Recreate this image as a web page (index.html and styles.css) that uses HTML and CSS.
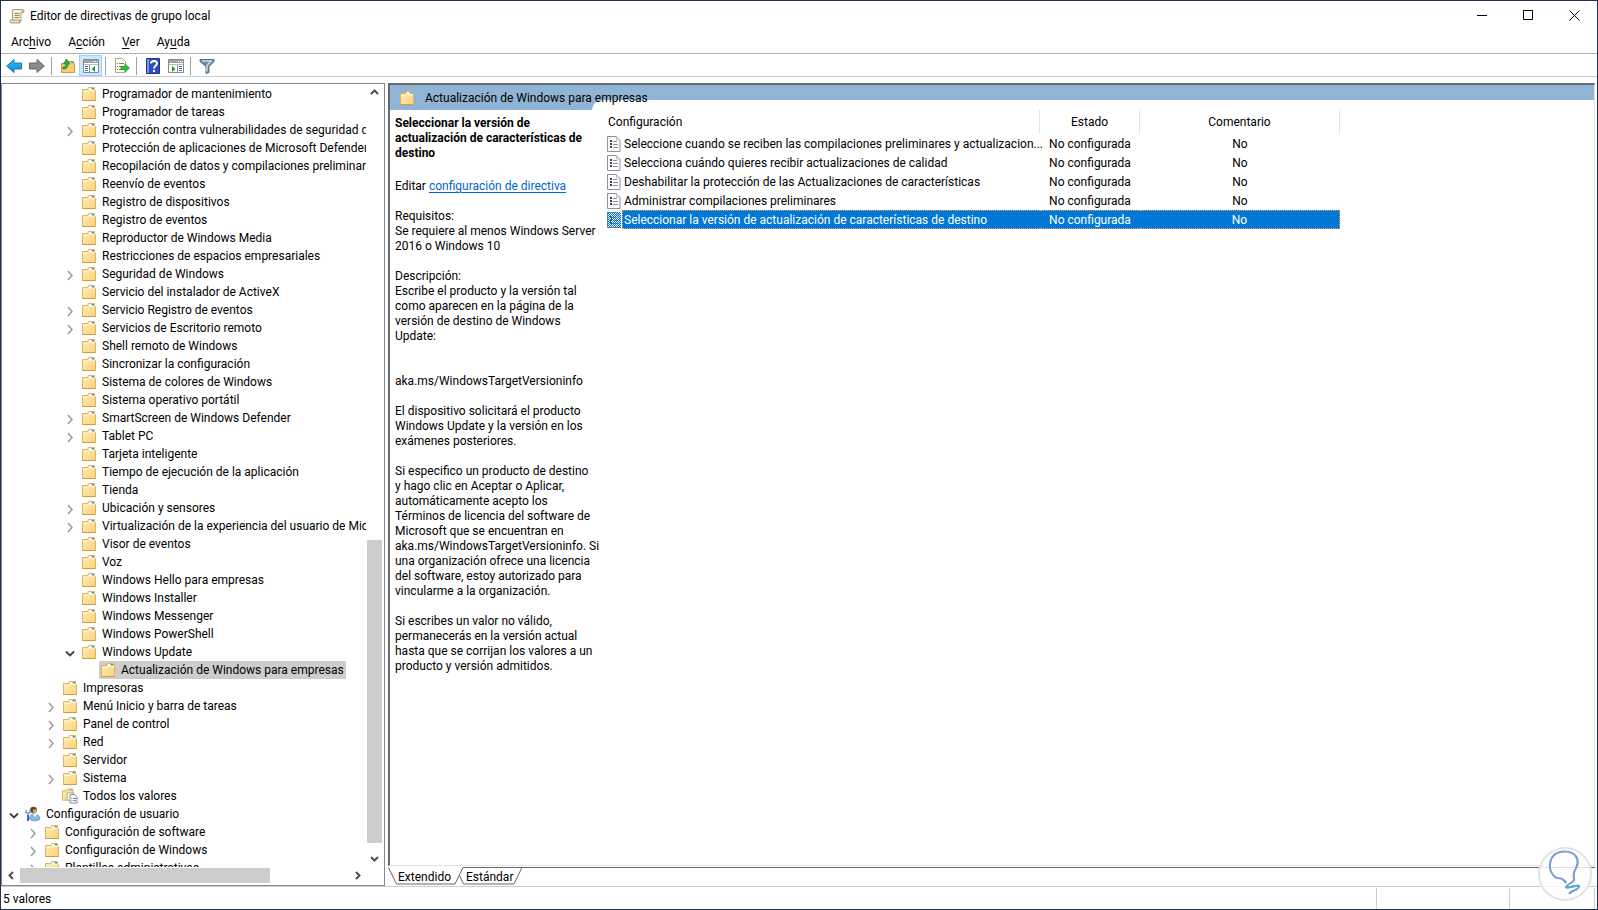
FILE: index.html
```
<!DOCTYPE html>
<html lang="es">
<head>
<meta charset="utf-8">
<title>Editor de directivas de grupo local</title>
<link rel="stylesheet" href="styles.css">
</head>
<body>
<svg class="defs" aria-hidden="true">
  <defs>
    <linearGradient id="paper" x1="0" y1="0" x2="1" y2="1"><stop offset="0" stop-color="#ffedb5"/><stop offset="1" stop-color="#fad27a"/></linearGradient>
    <linearGradient id="blue" x1="0" y1="0" x2="0" y2="1"><stop offset="0" stop-color="#35c0f5"/><stop offset="1" stop-color="#0a86d8"/></linearGradient>
    <pattern id="dither" width="2" height="2" patternUnits="userSpaceOnUse"><path d="M0 0h1v1H0zM1 1h1v1H1z" fill="#0078d7"/></pattern>
    <symbol id="folder" viewBox="0 0 16 16">
      <path d="M1.500 14.500V3.500h5l1-2h6v3h1v10z" fill="url(#paper)" stroke="#dfb45c"/>
      <path d="M8.500 2h4.500v2H8z" fill="#fff"/><path d="M10.500 2h2.500v1.500h-2.500z" fill="#39a0e0"/>
      <path d="M2 5.500h5.500l1-1h5.500" fill="none" stroke="#fff3cb"/>
      <path d="M1.500 14.500h13" stroke="#cc9c46"/>
    </symbol>
    <symbol id="page" viewBox="0 0 14 16">
      <path d="M.5.500h9l3.500 3.500v11.500H.5z" fill="#fff" stroke="#8e9297"/>
      <path d="M9.500.500v3.500H13" fill="#eee" stroke="#bbb"/>
      <path d="M3 4h2v2H3zM3 7h2v2H3zM3 10h2v2H3z" fill="#3b4654"/>
      <path d="M6 5.500h4M6 8.500h5M6 11.500h5" stroke="#8591a0"/>
    </symbol>
    <symbol id="right" viewBox="0 0 16 16"><path d="M6 4l4 4.500L6 13" fill="none" stroke="#9b9b9b" stroke-width="1.500"/></symbol>
    <symbol id="down" viewBox="0 0 16 16"><path d="M4 6.500l4 4 4-4" fill="none" stroke="#404040" stroke-width="1.800"/></symbol>
    <symbol id="chev" viewBox="0 0 17 17"><path d="M5 10l3.500-3.500L12 10" fill="none" stroke="#505050" stroke-width="2"/></symbol>
    <symbol id="all" viewBox="0 0 17 16">
      <path d="M.5 12.500v-10h4l1-2h6v3h1v9z" fill="url(#paper)" stroke="#dfb45c"/><path d="M8 1h3v1H8z" fill="#39a0e0"/>
      <path d="M5.500 4.500h6v8h-6z" fill="#fff" stroke="#aaa"/><path d="M8.500 6.500h5l2.500 2.500v6.500H8.500z" fill="#fff" stroke="#888"/>
      <path d="M10 10.500h1m1 0h3M10 13h1m1 0h3" stroke="#536273"/>
    </symbol>
    <symbol id="user" viewBox="0 0 16 16">
      <circle cx="8.500" cy="4" r="3.300" fill="#59482f"/><path d="M8 3.500h3.500V6L9.500 8 8 6z" fill="#d8a66e"/>
      <path d="M4.500 13c0-4 2-5 4.500-5 4 0 5.500 2 6 5-2 2.500-8 2.500-10.500 0z" fill="#89b9dc" stroke="#518cb7" stroke-width=".7"/>
      <path d="M8 8l2 3 2-3z" fill="#fff"/>
      <path d="M1 4v2.500l2 1 2-1V4M3 7v8" fill="none" stroke="#8198b1" stroke-width="1.500"/><path d="M3 9v6" stroke="#2f72c4" stroke-width="2"/>
    </symbol>
    <symbol id="pane" viewBox="0 0 16 16">
      <path d="M.5 1.500h15v13H.5z" fill="#fff" stroke="#858b91"/><path d="M1 2h14v3H1z" fill="#9aa2ab"/><path d="M10 3.500h1m1 0h1m1 0h1" stroke="#fff"/>
      <path d="M1 6.500h14" stroke="#b9bec3"/>
    </symbol>
  </defs>
</svg>
<div class="window">
  <header class="titlebar">
    <svg class="i16" viewBox="0 0 16 16"><path d="M4 1.500h9.500c2 0 2 3 0 3H12v9H3.500V3z" fill="#f7f0d6" stroke="#a99c74"/><path d="M12 4.500h2V1.500" fill="#cbbd92" stroke="#a99c74"/><path d="M5.500 5.500h5m-5 2h5m-5 2h5" stroke="#918874"/><path d="M1.500 12h9v3h-8c-2 0-2-2-1-3z" fill="#eee2b9" stroke="#a99c74"/></svg>
    <h1 class="title">Editor de directivas de grupo local</h1>
    <div class="controls">
      <button aria-label="Minimizar"><svg viewBox="0 0 11 11"><path d="M0 5.500h10"/></svg></button>
      <button aria-label="Maximizar"><svg viewBox="0 0 11 11"><path d="M.5.500h9v9h-9z"/></svg></button>
      <button aria-label="Cerrar"><svg viewBox="0 0 11 11"><path d="M.5.500l10 10m0-10l-10 10"/></svg></button>
    </div>
  </header>
  <nav class="menu">
    <button>Arc<u>h</u>ivo</button><button>A<u>c</u>ción</button><button><u>V</u>er</button><button>Ay<u>u</u>da</button>
  </nav>
  <div class="toolbar">
    <button aria-label="Atrás"><svg viewBox="0 0 16 16"><path d="M.7 8L8 1.500V5h7.500v6H8v3.500z" fill="url(#blue)" stroke="#1778b0"/></svg></button>
    <button aria-label="Adelante"><svg viewBox="0 0 16 16"><path d="M15.300 8L8 1.500V5H.5v6H8v3.500z" fill="#8b8b8b" stroke="#666"/></svg></button>
    <span class="sep"></span>
    <button aria-label="Subir un nivel"><svg viewBox="0 0 16 16"><path d="M1.500 14.500v-9h6l1-2h5v2h1v9z" fill="#f7cd72" stroke="#c99b45"/><path d="M11 4h3v1h-3z" fill="#39a0e0"/><path d="M3 11c4 0 5-2 5-5h2L6.500 1 3.500 6H6c0 2-1 3-3 3z" fill="#2fae35" stroke="#168421" stroke-width=".7"/></svg></button>
    <button class="on" aria-label="Mostrar u ocultar árbol"><svg viewBox="0 0 16 16"><use href="#pane"/><path d="M6.500 7v8" stroke="#858b91"/><path d="M2 8.500h3m-3 2h3m-3 2h3" stroke="#4a6f94"/><path d="M12 8v6l-3.500-3z" fill="#16a51e"/></svg></button>
    <span class="sep"></span>
    <button aria-label="Exportar lista"><svg viewBox="0 0 16 16"><path d="M1.500.500h7l3 3v11h-10z" fill="#fffbe9" stroke="#b3aa8c"/><path d="M3 5.500h1m1 0h5M3 8.500h1m1 0h4M3 11.500h1m1 0h4" stroke="#7b7b86"/><path d="M7 8.500h4V6l4.500 4-4.500 4v-2.500H7z" fill="#34bd37" stroke="#1c9222" stroke-width=".7"/></svg></button>
    <span class="sep"></span>
    <button aria-label="Ayuda"><svg viewBox="0 0 16 16"><path d="M1.500.500h13v15h-13z" fill="#2c50b8" stroke="#1c348c"/><path d="M2 1h2v14H2z" fill="#7896df"/><path d="M6 5.500c0-3.500 6-3.500 6 0 0 2.500-3 2-3 5M9 12v2" fill="none" stroke="#fff" stroke-width="2"/></svg></button>
    <button aria-label="Panel de acciones"><svg viewBox="0 0 16 16"><use href="#pane"/><path d="M9.500 7v8" stroke="#858b91"/><path d="M11 8.500h3m-3 2h3m-3 2h3" stroke="#4a6f94"/><path d="M4 8v6l3.500-3z" fill="#16a51e"/></svg></button>
    <span class="sep"></span>
    <button aria-label="Filtro"><svg viewBox="0 0 16 16"><path d="M1 1.500h14v2l-5 5v6l-3 1v-7l-6-5z" fill="#718ba0" stroke="#587087"/><path d="M3 3h9l-4 4.500v6" fill="none" stroke="#c9dce8" stroke-width="1.500"/></svg></button>
  </div>
  <div class="work">
    <aside class="treebox">
      <ul class="tree">
        <li class="l3"><svg><use href="#folder"/></svg><span>Programador de mantenimiento</span></li>
        <li class="l3"><svg><use href="#folder"/></svg><span>Programador de tareas</span></li>
        <li class="l3"><button aria-label="Expandir"><svg><use href="#right"/></svg></button><svg><use href="#folder"/></svg><span>Protección contra vulnerabilidades de seguridad d</span></li>
        <li class="l3"><svg><use href="#folder"/></svg><span>Protección de aplicaciones de Microsoft Defender</span></li>
        <li class="l3"><svg><use href="#folder"/></svg><span>Recopilación de datos y compilaciones preliminar</span></li>
        <li class="l3"><svg><use href="#folder"/></svg><span>Reenvío de eventos</span></li>
        <li class="l3"><svg><use href="#folder"/></svg><span>Registro de dispositivos</span></li>
        <li class="l3"><svg><use href="#folder"/></svg><span>Registro de eventos</span></li>
        <li class="l3"><svg><use href="#folder"/></svg><span>Reproductor de Windows Media</span></li>
        <li class="l3"><svg><use href="#folder"/></svg><span>Restricciones de espacios empresariales</span></li>
        <li class="l3"><button aria-label="Expandir"><svg><use href="#right"/></svg></button><svg><use href="#folder"/></svg><span>Seguridad de Windows</span></li>
        <li class="l3"><svg><use href="#folder"/></svg><span>Servicio del instalador de ActiveX</span></li>
        <li class="l3"><button aria-label="Expandir"><svg><use href="#right"/></svg></button><svg><use href="#folder"/></svg><span>Servicio Registro de eventos</span></li>
        <li class="l3"><button aria-label="Expandir"><svg><use href="#right"/></svg></button><svg><use href="#folder"/></svg><span>Servicios de Escritorio remoto</span></li>
        <li class="l3"><svg><use href="#folder"/></svg><span>Shell remoto de Windows</span></li>
        <li class="l3"><svg><use href="#folder"/></svg><span>Sincronizar la configuración</span></li>
        <li class="l3"><svg><use href="#folder"/></svg><span>Sistema de colores de Windows</span></li>
        <li class="l3"><svg><use href="#folder"/></svg><span>Sistema operativo portátil</span></li>
        <li class="l3"><button aria-label="Expandir"><svg><use href="#right"/></svg></button><svg><use href="#folder"/></svg><span>SmartScreen de Windows Defender</span></li>
        <li class="l3"><button aria-label="Expandir"><svg><use href="#right"/></svg></button><svg><use href="#folder"/></svg><span>Tablet PC</span></li>
        <li class="l3"><svg><use href="#folder"/></svg><span>Tarjeta inteligente</span></li>
        <li class="l3"><svg><use href="#folder"/></svg><span>Tiempo de ejecución de la aplicación</span></li>
        <li class="l3"><svg><use href="#folder"/></svg><span>Tienda</span></li>
        <li class="l3"><button aria-label="Expandir"><svg><use href="#right"/></svg></button><svg><use href="#folder"/></svg><span>Ubicación y sensores</span></li>
        <li class="l3"><button aria-label="Expandir"><svg><use href="#right"/></svg></button><svg><use href="#folder"/></svg><span>Virtualización de la experiencia del usuario de Mic</span></li>
        <li class="l3"><svg><use href="#folder"/></svg><span>Visor de eventos</span></li>
        <li class="l3"><svg><use href="#folder"/></svg><span>Voz</span></li>
        <li class="l3"><svg><use href="#folder"/></svg><span>Windows Hello para empresas</span></li>
        <li class="l3"><svg><use href="#folder"/></svg><span>Windows Installer</span></li>
        <li class="l3"><svg><use href="#folder"/></svg><span>Windows Messenger</span></li>
        <li class="l3"><svg><use href="#folder"/></svg><span>Windows PowerShell</span></li>
        <li class="l3"><button aria-label="Contraer"><svg><use href="#down"/></svg></button><svg><use href="#folder"/></svg><span>Windows Update</span></li>
        <li class="l4 current"><svg><use href="#folder"/></svg><span>Actualización de Windows para empresas</span></li>
        <li class="l2"><svg><use href="#folder"/></svg><span>Impresoras</span></li>
        <li class="l2"><button aria-label="Expandir"><svg><use href="#right"/></svg></button><svg><use href="#folder"/></svg><span>Menú Inicio y barra de tareas</span></li>
        <li class="l2"><button aria-label="Expandir"><svg><use href="#right"/></svg></button><svg><use href="#folder"/></svg><span>Panel de control</span></li>
        <li class="l2"><button aria-label="Expandir"><svg><use href="#right"/></svg></button><svg><use href="#folder"/></svg><span>Red</span></li>
        <li class="l2"><svg><use href="#folder"/></svg><span>Servidor</span></li>
        <li class="l2"><button aria-label="Expandir"><svg><use href="#right"/></svg></button><svg><use href="#folder"/></svg><span>Sistema</span></li>
        <li class="l2"><svg><use href="#all"/></svg><span>Todos los valores</span></li>
        <li class="l0"><button aria-label="Contraer"><svg><use href="#down"/></svg></button><svg><use href="#user"/></svg><span>Configuración de usuario</span></li>
        <li class="l1"><button aria-label="Expandir"><svg><use href="#right"/></svg></button><svg><use href="#folder"/></svg><span>Configuración de software</span></li>
        <li class="l1"><button aria-label="Expandir"><svg><use href="#right"/></svg></button><svg><use href="#folder"/></svg><span>Configuración de Windows</span></li>
        <li class="l1"><button aria-label="Expandir"><svg><use href="#right"/></svg></button><svg><use href="#folder"/></svg><span>Plantillas administrativas</span></li>
      </ul>
      <div class="vscroll">
        <button aria-label="Arriba"><svg><use href="#chev"/></svg></button>
        <div class="track"><div class="thumb"></div></div>
        <button class="flip" aria-label="Abajo"><svg><use href="#chev"/></svg></button>
      </div>
      <div class="hscroll">
        <button class="toleft" aria-label="Izquierda"><svg><use href="#chev"/></svg></button>
        <div class="track"><div class="thumb"></div></div>
        <button class="toright" aria-label="Derecha"><svg><use href="#chev"/></svg></button>
      </div>
    </aside>
    <main class="result">
      <div class="view">
        <div class="band"><svg class="i16"><use href="#folder"/></svg><h2>Actualización de Windows para empresas</h2></div>
        <div class="cols">
          <section class="detail">
            <h3>Seleccionar la versión de<br>actualización de características de<br>destino</h3>
            <p class="edit">Editar <a href="#editar">configuración de directiva</a></p>
            <p>Requisitos:<br>Se requiere al menos Windows Server<br>2016 o Windows 10</p>
            <p>Descripción:<br>Escribe el producto y la versión tal<br>como aparecen en la página de la<br>versión de destino de Windows<br>Update:</p>
            <p class="far">aka.ms/WindowsTargetVersioninfo</p>
            <p>El dispositivo solicitará el producto<br>Windows Update y la versión en los<br>exámenes posteriores.</p>
            <p>Si especifico un producto de destino<br>y hago clic en Aceptar o Aplicar,<br>automáticamente acepto los<br>Términos de licencia del software de<br>Microsoft que se encuentran en<br>aka.ms/WindowsTargetVersioninfo. Si<br>una organización ofrece una licencia<br>del software, estoy autorizado para<br>vincularme a la organización.</p>
            <p>Si escribes un valor no válido,<br>permanecerás en la versión actual<br>hasta que se corrijan los valores a un<br>producto y versión admitidos.</p>
          </section>
          <section class="list">
            <table>
              <colgroup><col class="c1"><col class="c2"><col class="c3"></colgroup>
              <thead><tr><th>Configuración</th><th>Estado</th><th>Comentario</th></tr></thead>
              <tbody>
                <tr><td><div class="name"><svg><use href="#page"/></svg><span>Seleccione cuando se reciben las compilaciones preliminares y actualizacion...</span></div></td><td>No configurada</td><td>No</td></tr>
                <tr><td><div class="name"><svg><use href="#page"/></svg><span>Selecciona cuándo quieres recibir actualizaciones de calidad</span></div></td><td>No configurada</td><td>No</td></tr>
                <tr><td><div class="name"><svg><use href="#page"/></svg><span>Deshabilitar la protección de las Actualizaciones de características</span></div></td><td>No configurada</td><td>No</td></tr>
                <tr><td><div class="name"><svg><use href="#page"/></svg><span>Administrar compilaciones preliminares</span></div></td><td>No configurada</td><td>No</td></tr>
                <tr class="sel"><td><div class="name"><svg><use href="#page"/><rect width="14" height="16" fill="url(#dither)"/></svg><span>Seleccionar la versión de actualización de características de destino</span></div></td><td>No configurada</td><td>No</td></tr>
              </tbody>
            </table>
          </section>
        </div>
      </div>
      <div class="tabs">
        <svg viewBox="0 0 140 18"><path d="M0 0h75l-8 17H9L.5 0z" fill="#fff"/><path d="M.5.500l8 16.500H67L75 .500h59L126 17H75.500l-4-8.500" fill="none" stroke="#666"/></svg>
        <button class="t1">Extendido</button><button class="t2">Estándar</button>
      </div>
    </main>
  </div>
  <footer class="status"><span class="s1">5 valores</span><span class="s2"></span><span class="s3"></span></footer>
  <svg class="bulb" viewBox="0 0 54 54" aria-hidden="true">
    <circle cx="27" cy="27" r="26" fill="#fff" fill-opacity=".8" stroke="#e2e3e5" stroke-width="2"/>
    <path d="M28 36c-3-5-6-5-9-5-6-3-9-11-6-18C16 4 27 3 34 6c7 4 7 9 4 15-2 4-3 6-2 12-1 3-7 4-8 7 1 2 9-2 13-1 1 4-8 4-10 8" fill="none" stroke="#7b9bd1" stroke-width="2"/>
    <path d="M28 36l-2-3m2 7c1 2 9-2 13-1" fill="none" stroke="#48add7" stroke-width="2"/>
  </svg>
</div>
</body>
</html>
```
FILE: styles.css
```
* { box-sizing: border-box; }
body { margin: 0; font: 12px/15px "Segoe UI", Roboto, "Open Sans", sans-serif; color: #000; background: #fff; }
button { border: 0; padding: 0; margin: 0; background: none; font: inherit; color: inherit; }
h1, h2, h3, p, ul { margin: 0; padding: 0; font-size: inherit; font-weight: normal; }
svg { display: block; flex: none; }
.defs { position: absolute; width: 0; height: 0; }
.i16 { width: 16px; height: 16px; }

.window { position: relative; height: 100vh; display: flex; flex-direction: column; border: 1px solid #1f3050; overflow: hidden; }

.titlebar { display: flex; align-items: center; height: 29px; padding-left: 8px; flex: none; }
.title { margin-left: 5px; padding-top: 2px; flex: 1; }
.controls { display: flex; }
.controls button { width: 46px; height: 29px; display: grid; place-items: center; }
.controls svg { width: 11px; height: 11px; fill: none; stroke: #000; }

.menu { display: flex; align-items: center; gap: 17px; height: 24px; padding: 2px 0 0 10px; border-bottom: 1px solid #b0b0b0; flex: none; }
.menu u { text-underline-offset: 2px; }

.toolbar { display: flex; align-items: flex-end; height: 23px; padding-left: 1px; border-bottom: 1px solid #cdcdcd; flex: none; }
.toolbar button { width: 23px; height: 21px; display: grid; place-items: center; border: 1px solid transparent; }
.toolbar button svg { width: 16px; height: 16px; }
.toolbar .on { background: #cce8ff; border-color: #99d1ff; }
.sep { width: 1px; height: 18px; margin: 0 4px 1px 3px; background: #a0a0a0; }

.work { flex: 1; min-height: 0; display: flex; gap: 3px; padding: 6px 2px 0 0; }

.treebox { width: 384px; flex: none; display: grid; grid-template-columns: 1fr 18px; grid-template-rows: 1fr 18px; border: 1px solid #828790; min-height: 0; }
.tree { list-style: none; overflow: hidden; min-height: 0; min-width: 0; padding-top: 1px; }
.tree li { position: relative; display: flex; align-items: center; height: 18px; white-space: nowrap; }
.tree li > svg { width: 16px; height: 16px; }
.tree li > span { padding: 0 2px 0 5px; line-height: 18px; }
.tree button { position: absolute; margin-left: -19px; top: 2px; }
.tree button svg { width: 16px; height: 16px; }
.l0 { margin-left: 23px; }
.l1 { margin-left: 42px; }
.l2 { margin-left: 60px; }
.l3 { margin-left: 79px; }
.l4 { margin-left: 97px; padding-left: 1px; }
.current { width: max-content; background: #cdcdcd; }
.vscroll { display: flex; flex-direction: column; }
.hscroll { display: flex; padding-left: 1px; }
.vscroll button, .hscroll button { width: 17px; height: 17px; }
.vscroll button svg, .hscroll button svg { width: 17px; height: 17px; }
.flip { transform: rotate(180deg); }
.toleft { transform: rotate(-90deg); }
.toright { transform: rotate(90deg); }
.track { flex: 1; display: flex; }
.vscroll .track { flex-direction: column; justify-content: flex-end; padding: 0 2px 0 1px; }
.vscroll .thumb { height: 40.5%; margin-bottom: 7px; background: #cdcdcd; }
.hscroll .track { padding: 1px 0 2px; }
.hscroll .thumb { width: 76%; background: #cdcdcd; }

.result { flex: 1; min-width: 0; display: flex; flex-direction: column; }
.view { flex: 1; min-height: 0; display: flex; flex-direction: column; overflow: hidden; border: 1px solid #e3e3e3; border-top: 2px solid #696969; border-left: 2px solid #696969; }
.band { position: relative; z-index: 1; display: flex; align-items: center; gap: 10px; height: 25px; padding-left: 9px; flex: none; }
.band h2 { padding-top: 2px; }
.cols { flex: 1; min-height: 0; display: grid; grid-template-columns: 202px 1fr; margin-top: -25px; background: linear-gradient(#8fb4d6 25px, #fff 25px); }
.detail { position: relative; z-index: 1; margin-top: 25px; padding: 6px 0 0 5px; white-space: nowrap; }
.detail h3 { font-weight: bold; }
.detail p { margin-top: 15px; }
.detail .edit { margin-top: 18px; }
.detail .far { margin-top: 30px; }
.detail a { color: #0066cc; text-underline-offset: 2px; }
.list { margin-top: 15px; padding: 10px 0 0 15px; background: #fff; border-top-left-radius: 10px; }
table { border-collapse: separate; border-spacing: 0; table-layout: fixed; width: 733px; }
.c1 { width: 433px; }
.c2 { width: 100px; }
.c3 { width: 200px; }
th { height: 24px; padding: 0; font-weight: normal; border-right: 1px solid #e5e5e5; }
th:first-child { text-align: left; padding-left: 1px; }
td { height: 19px; padding: 2px 0 0; text-align: center; white-space: nowrap; }
td:first-child { text-align: left; padding: 0; }
.name { display: flex; align-items: center; gap: 1px; }
.name svg { width: 14px; height: 16px; }
.name span { flex: 1; min-width: 0; height: 19px; padding: 1px 0 0 2px; line-height: 19px; }
.sel td { background: #0078d7; color: #fff; border-top: 1px dotted #ff9a3d; border-bottom: 1px dotted #ff9a3d; }
.sel td:first-child { background: none; border: 0; }
.sel td:last-child { border-right: 1px dotted #ff9a3d; }
.sel .name span { background: #0078d7; border: 1px dotted #ff9a3d; border-right: 0; padding-left: 1px; line-height: 17px; }

.tabs { position: relative; display: flex; height: 19px; padding-left: 10px; gap: 15px; margin-top: 1px; flex: none; background: linear-gradient(90deg, transparent 134px, #666 134px) top / 100% 1px no-repeat; }
.tabs svg { position: absolute; left: 0; top: 0; width: 140px; height: 18px; }
.tabs button { position: relative; height: 18px; padding-top: 2px; }

.status { display: flex; height: 23px; padding: 1px 2px 0 0; border-top: 1px solid #cdcdcd; line-height: 22px; flex: none; }
.status span { border-right: 1px solid #cdcdcd; }
.s1 { flex: 1; padding-left: 2px; }
.s2 { width: 133px; }
.s3 { width: 85px; }
.bulb { position: absolute; right: 5px; bottom: 8px; width: 54px; height: 54px; }
```
